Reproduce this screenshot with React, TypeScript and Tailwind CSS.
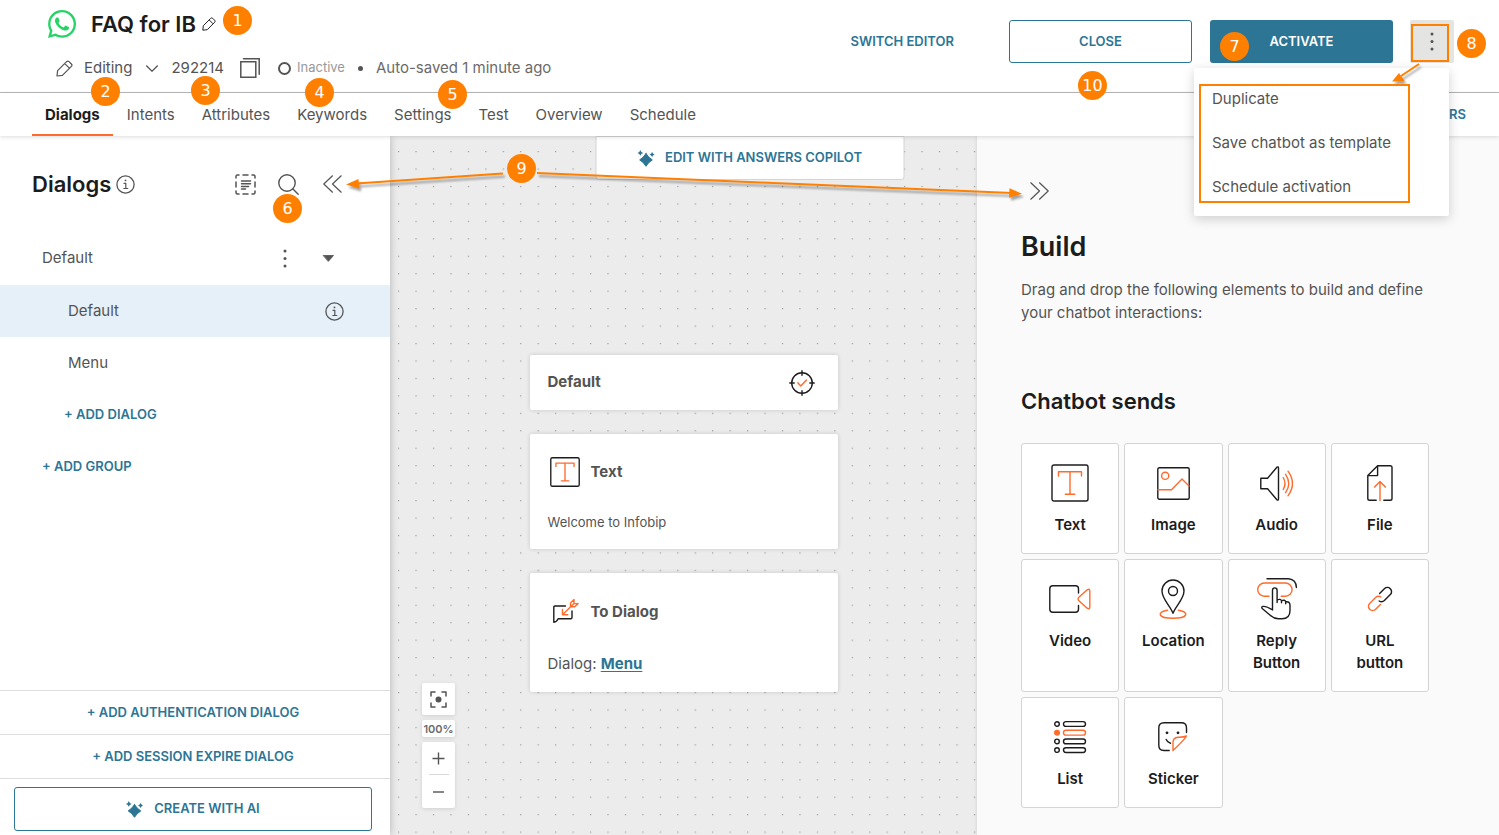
import type { ReactNode } from "react";
import clsx from "clsx";
import { FaWhatsapp } from "react-icons/fa";

const ACCENT = "#ff6b2c";

type IconProps = {
  w: number;
  h: number;
  className?: string;
  children: ReactNode;
};

function Icon({ w, h, className, children }: IconProps) {
  return (
    <svg
      width={w}
      height={h}
      viewBox={`0 0 ${w} ${h}`}
      fill="none"
      stroke="currentColor"
      strokeWidth={1.4}
      strokeLinecap="round"
      strokeLinejoin="round"
      aria-hidden="true"
      className={clsx("shrink-0 overflow-visible", className)}
    >
      {children}
    </svg>
  );
}

function PencilIcon({ size }: { size: number }) {
  return (
    <svg
      width={size}
      height={size}
      viewBox="0 0 17 17"
      fill="none"
      stroke="currentColor"
      strokeWidth={1.2}
      strokeLinejoin="round"
      aria-hidden="true"
    >
      <path d="M1 16 1.6 10.6 10.6 1.6Q11.8.5 13 1.6L15.4 4Q16.5 5.2 15.4 6.4L6.4 15.4ZM8.8 3.6 13.4 8.2" />
    </svg>
  );
}

function InfoIcon() {
  return (
    <Icon w={19} h={19}>
      <circle cx="9.5" cy="9.5" r="8.6" strokeWidth="1.3" />
      <path d="M8 8.3h1.8v5.2M7.8 13.5h4" strokeWidth="1.2" />
      <circle cx="9.5" cy="5.4" r=".9" fill="currentColor" stroke="none" />
    </Icon>
  );
}

function DotsIcon() {
  return (
    <Icon w={4} h={20}>
      <g fill="currentColor" stroke="none">
        <circle cx="2" cy="2" r="1.500" />
        <circle cx="2" cy="9.500" r="1.500" />
        <circle cx="2" cy="17" r="1.500" />
      </g>
    </Icon>
  );
}

function SparkleIcon() {
  return (
    <Icon w={17} h={17}>
      <g fill="currentColor" stroke="none">
        <path
          d="M8.500 3.500Q10.800 7.600 14.800 9.900 10.800 12.200 8.500 16.300 6.200 12.200 2.200 9.900 6.200 7.600 8.500 3.500Z"
          stroke="currentColor"
          strokeWidth="1"
        />
        <path d="M2.800 0 3.800 1.900 5.700 2.900 3.800 3.900 2.800 5.800 1.800 3.900 0 2.900 1.800 1.900Z" />
        <path d="M14.600 1.900 15.500 3.600 17 4.500 15.500 5.400 14.600 7.100 13.700 5.400 12 4.500 13.700 3.600Z" />
      </g>
    </Icon>
  );
}

function TextIcon({ small }: { small?: boolean }) {
  return (
    <svg
      width={small ? 30 : 38}
      height={small ? 30 : 38}
      viewBox="0 0 38 38"
      fill="none"
      stroke="#1c1c1c"
      strokeWidth={small ? 1.7 : 1.4}
      strokeLinecap="round"
      strokeLinejoin="round"
      aria-hidden="true"
    >
      <rect x="1" y="1" width="36" height="36" rx="2" />
      <path d="M7.5 12V7.8h23V12M19 7.8V30M14.3 30.2h9.4" stroke={ACCENT} />
    </svg>
  );
}

const ImageIcon = (
  <Icon w={33} h={33}>
    <rect x=".8" y=".8" width="31.4" height="31.4" rx="1.5" />
    <circle cx="8.2" cy="8.8" r="3.6" stroke={ACCENT} />
    <path d="M1 22.8h13.5L25 12l7 7" stroke={ACCENT} />
  </Icon>
);

const AudioIcon = (
  <Icon w={34} h={35}>
    <path d="M.8 12.2v10.6h6.8l9.3 11q1.6 1 1.6-.8V2q0-1.8-1.6-.8l-9.3 11Z" />
    <path
      d="M23.2 11.5q3.6 6 0 12M25.6 8.3q6.2 9.2 0 18.4M28 5.2q9 12.3 0 24.6"
      stroke={ACCENT}
    />
  </Icon>
);

const FileIcon = (
  <Icon w={26} h={36}>
    <path d="M16.8 35.2h6.4q1.8 0 1.8-1.8V2.6Q25 .8 23.2.8H10.6L.8 10.6v22.8q0 1.8 1.8 1.8h6.6M10.6.8v9.8H.8" />
    <path d="M13 35.4V16.6M7.6 22 13 16.6l5.4 5.4" stroke={ACCENT} />
  </Icon>
);

const VideoIcon = (
  <Icon w={42} h={28}>
    <path d="M29.5 8V3.8q0-3-3-3H3.8q-3 0-3 3v20.4q0 3 3 3h22.7q3 0 3-3V20.5" />
    <path
      d="M29.6 12.4q-1.2 1.6 0 3.2l8.6 7.6q2.6 1.4 2.6-1.2V6q0-2.6-2.6-1.2Z"
      stroke={ACCENT}
    />
  </Icon>
);

const LocationIcon = (
  <Icon w={28} h={40}>
    <path d="M14 34.2C11.5 27.2 3 20 3 12a11 11 0 0 1 22 0c0 8-8.5 15.2-11 22.2Z" />
    <circle cx="14" cy="12" r="4.5" />
    <path
      d="M8.6 31.3C-2.5 32.8-1.5 39.3 14 39.3s16.5-6.5 5.4-8"
      stroke={ACCENT}
    />
  </Icon>
);

const ReplyIcon = (
  <Icon w={40} h={42}>
    <path d="M10 .8h21.5q7.7.7 7.9 8.8" />
    <path
      d="M12 18.2H7.3a6.600 6.600 0 0 1 0-13.200h21.200a6.600 6.600 0 0 1 0 13.200H24.200"
      stroke={ACCENT}
    />
    <path d="M15.500 32V12.200a2.300 2.300 0 0 1 4.600 0v12.300M20.100 21.900q3.700-1.500 4.400 1v1.900M24.500 22.700q3.500-1.400 4.200 1.100v1.900M28.700 23.900q4.300-.7 4.300 3.400v5.200q0 8.300-8 8.300h-3.500q-4.300 0-8.300-3.600l-7.700-6.400q-1.600-1.900.4-2.400 3.200-.4 9.600 3.600" />
  </Icon>
);

const LinkIcon = (
  <Icon w={24} h={24}>
    <g transform="translate(12 12) rotate(-45)">
      <path d="M3.600-4.200h6.800a4.200 4.200 0 0 1 0 8.400H2a4.200 4.200 0 0 1-4-3.400" />
      <path
        d="M-3.600 4.200h-6.800a4.200 4.200 0 0 1 0-8.400H-2a4.200 4.200 0 0 1 4 3.400"
        stroke={ACCENT}
      />
    </g>
  </Icon>
);

const ListIcon = (
  <Icon w={32} h={33}>
    {[3, 11.7, 20.4, 29.1].map((y, i) => (
      <g key={y} stroke={i === 1 ? ACCENT : "#1c1c1c"}>
        <circle cx="3" cy={y} r="2.3" fill={i === 1 ? ACCENT : "none"} />
        <rect x="9.5" y={y - 2.4} width="22" height="4.8" rx="2.4" />
      </g>
    ))}
  </Icon>
);

const StickerIcon = (
  <Icon w={30} h={30}>
    <path d="M28.5 10.5V6q0-5.200-5.200-5.200H6Q.8.8.8 6v17.300q0 5.200 5.200 5.200h5.200M8.200 17.500q1.200 3 4.300 3.800" />
    <g fill="currentColor" stroke="none">
      <circle cx="9" cy="10.800" r="1.400" />
      <circle cx="20" cy="10.800" r="1.400" />
    </g>
    <path
      d="M15 28.600v-8.100q0-5 5-5.300 5.500.2 8.500-1.200-2 3.600-13.500 14.600Z"
      stroke={ACCENT}
    />
  </Icon>
);

const TargetIcon = (
  <Icon w={26} h={26}>
    <circle cx="13" cy="13" r="10.3" />
    <path d="M13 .8v4.400M13 20.800v4.400M.8 13h4.400M20.800 13h4.400" />
    <path d="m8.800 12.800 3 3.200 5.600-6" stroke={ACCENT} />
  </Icon>
);

const ToDialogIcon = (
  <Icon w={26} h={26}>
    <path d="M12.500 7H2Q.8 7 .8 8.200v15q3-.3 4.400-3.400h12.600q1.200 0 1.200-1.200V12" />
    <path
      d="M9.500 10.500v5.300h5.300M9.500 15.800 21 4.500M17.500 7.800V4L21 .6v4h4.200l-3.500 3.200Z"
      stroke={ACCENT}
    />
  </Icon>
);

const tabs = [
  "Dialogs",
  "Intents",
  "Attributes",
  "Keywords",
  "Settings",
  "Test",
  "Overview",
  "Schedule",
];

const elements = [
  { label: "Text", icon: <TextIcon /> },
  { label: "Image", icon: ImageIcon },
  { label: "Audio", icon: AudioIcon },
  { label: "File", icon: FileIcon },
  { label: "Video", icon: VideoIcon },
  { label: "Location", icon: LocationIcon },
  { label: "Reply Button", icon: ReplyIcon },
  { label: "URL button", icon: LinkIcon },
  { label: "List", icon: ListIcon },
  { label: "Sticker", icon: StickerIcon },
];

const badges = [
  { n: 1, pos: "left-[223px] top-[6px]" },
  { n: 2, pos: "left-[91px] top-[77px]" },
  { n: 3, pos: "left-[191px] top-[76px]" },
  { n: 4, pos: "left-[305px] top-[78px]" },
  { n: 5, pos: "left-[438px] top-[80px]" },
  { n: 6, pos: "left-[273px] top-[194px]" },
  { n: 9, pos: "left-[507px] top-[154px]" },
  { n: 7, pos: "right-[250px] top-[32px]" },
  { n: 8, pos: "right-[13px] top-[29px]" },
  { n: 10, pos: "right-[392px] top-[71px]" },
];

function Header() {
  return (
    <header className="flex h-[93px] justify-between border-b border-[#b9b9b9] bg-white pr-[45px] pl-12">
      <div className="pt-2">
        <div className="flex h-8 items-center">
          <FaWhatsapp size={32} className="-ml-0.5 text-[#25d366]" />
          <h1 className="ml-[13px] text-[22px] font-semibold text-[#1c1c1c]">FAQ for IB</h1>
          <button type="button" aria-label="Rename chatbot" className="ml-1.5 text-[#1c1c1c]">
            <PencilIcon size={14} />
          </button>
        </div>
        <div className="mt-4 flex h-6 items-center text-[15px]">
          <button type="button" className="ml-2 flex items-center">
            <PencilIcon size={17} />
            <span className="ml-[11px]">Editing</span>
            <Icon w={12} h={7} className="ml-3.5">
              <path d="M.5.8 6 6.2 11.5.8" strokeWidth="1.2" />
            </Icon>
          </button>
          <span className="ml-[13px]">292214</span>
          <button type="button" aria-label="Copy ID" className="ml-4">
            <Icon w={20} h={20}>
              <path
                d="M.8 3.8h15v15.400H.8ZM3.500.8h15.700v15.400"
                strokeWidth="1.5"
                strokeLinejoin="miter"
              />
            </Icon>
          </button>
          <span className="ml-[18px] h-[13px] w-[13px] rounded-full border-2 border-[#545454]" />
          <span className="ml-1.5 text-[13px] text-[#999999]">Inactive</span>
          <span className="ml-[13px] h-[5px] w-[5px] rounded-full bg-[#545454]" />
          <span className="ml-[13px] text-[#6b6b6b]">Auto-saved 1 minute ago</span>
        </div>
      </div>
      <div className="mt-5 flex h-[43px] items-stretch text-[13px] font-semibold">
        <button type="button" className="mr-[55px] text-[#2d7595]">SWITCH EDITOR</button>
        <button
          type="button"
          className="mr-[18px] w-[183px] rounded-[3px] border border-[#2d7595] text-[#2d7595]"
        >
          CLOSE
        </button>
        <button type="button" className="mr-[17px] w-[183px] rounded-[3px] bg-[#2d7595] text-white">
          ACTIVATE
        </button>
        <div className="relative flex">
          <button
            type="button"
            aria-label="More actions"
            className="flex w-11 items-center justify-center rounded-[2px] bg-[#e4e4e2]"
          >
            <DotsIcon />
          </button>
          <div className="absolute top-12 right-[5px] z-20 flex h-[148px] w-[255px] flex-col rounded-[2px] bg-white pt-[9px] text-[15px] font-normal shadow-[0_3px_12px_rgba(0,0,0,0.18)]">
            {["Duplicate", "Save chatbot as template", "Schedule activation"].map((item) => (
              <button key={item} type="button" className="h-11 pl-[18px] text-left">
                {item}
              </button>
            ))}
          </div>
        </div>
      </div>
    </header>
  );
}

function Tabs() {
  return (
    <nav className="relative z-10 flex h-[43px] items-stretch justify-between bg-white pr-[33px] pl-8 text-[15px] shadow-[0_1px_4px_rgba(0,0,0,0.14)]">
      <div className="flex gap-px">
        {tabs.map((tab, i) => (
          <a
            key={tab}
            href="#"
            className={clsx(
              "flex items-center border-b-2 px-[13px] pt-[3px]",
              i === 0 ? "border-[#ff6b2c] font-bold text-[#1c1c1c]" : "border-transparent"
            )}
          >
            {tab}
          </a>
        ))}
      </div>
      <button type="button" className="text-[13px] font-semibold text-[#2d7595]">RS</button>
    </nav>
  );
}

function Sidebar() {
  return (
    <aside className="relative z-[1] flex w-[390px] shrink-0 flex-col bg-white text-[15px] shadow-[0_0_8px_rgba(0,0,0,0.25)]">
      <div className="flex h-24 items-center pl-8">
        <h2 className="text-[22px] font-semibold text-[#1c1c1c]">Dialogs</h2>
        <span className="ml-[5px]">
          <InfoIcon />
        </span>
        <div className="mr-12 ml-auto flex items-center gap-[22px]">
          <button type="button" aria-label="Select dialogs">
            <Icon w={21} h={21}>
              <path
                d="M4 1H2.500Q1 1 1 2.500V4M17 1h1.500Q20 1 20 2.500V4M4 20H2.500Q1 20 1 18.500V17M17 20h1.500q1.500 0 1.500-1.500V17M8 1h5M8 20h5M1 8v5M20 8v5M6.500 7h9M6.500 9.800h9M6.500 12.500h7M6.500 15h4"
                strokeWidth="1.5"
              />
            </Icon>
          </button>
          <button type="button" aria-label="Search">
            <Icon w={21} h={21}>
              <circle cx="9" cy="9" r="8.2" />
              <path d="m15 15 5.200 5.200" />
            </Icon>
          </button>
          <button type="button" aria-label="Collapse panel" className="ml-0.5">
            <Icon w={19} h={18}>
              <path d="M9.500.8.8 9l8.700 8.200M18.200.8 9.500 9l8.700 8.200" strokeWidth="1.2" />
            </Icon>
          </button>
        </div>
      </div>
      <div className="flex h-[53px] items-center pl-[42px]">
        Default
        <button type="button" aria-label="Group actions" className="mr-9 ml-auto">
          <DotsIcon />
        </button>
        <button type="button" aria-label="Collapse group" className="mr-14">
          <Icon w={11} h={7}>
            <path d="M.5.500h10L5.500 6.200Z" fill="currentColor" strokeWidth=".8" />
          </Icon>
        </button>
      </div>
      <a
        href="#"
        className="flex h-[52px] items-center justify-between bg-[#e5f0f8] pr-[46px] pl-[68px]"
      >
        Default
        <InfoIcon />
      </a>
      <a href="#" className="flex h-[52px] items-center pl-[68px]">Menu</a>
      <button
        type="button"
        className="h-[52px] pl-16 text-left text-[13px] font-semibold text-[#2d7595]"
      >
        + ADD DIALOG
      </button>
      <button
        type="button"
        className="h-[51px] pl-[42px] text-left text-[13px] font-semibold text-[#2d7595]"
      >
        + ADD GROUP
      </button>
      <div className="mt-auto text-[13px] font-semibold text-[#2d7595]">
        <button type="button" className="h-11 w-full border-t border-[#dedede] pr-1">
          + ADD AUTHENTICATION DIALOG
        </button>
        <button type="button" className="h-11 w-full border-t border-[#dedede] pr-1">
          + ADD SESSION EXPIRE DIALOG
        </button>
        <div className="border-t border-[#dedede] pt-2 pr-[18px] pb-1 pl-3.5">
          <button
            type="button"
            className="flex h-11 w-full items-center justify-center gap-[11px] rounded-[3px] border border-[#2d7595]"
          >
            <SparkleIcon />
            CREATE WITH AI
          </button>
        </div>
      </div>
    </aside>
  );
}

const node = "w-[308px] rounded-[2px] bg-white px-[18px] shadow-[0_0_4px_rgba(0,0,0,0.16)]";

function Canvas() {
  return (
    <section className="relative flex-1 bg-[#ececec]">
      <svg className="absolute inset-0 h-full w-full" aria-hidden="true">
        <pattern id="dots" x="8" y="15" width="17.45" height="17.45" patternUnits="userSpaceOnUse">
          <rect width="1.2" height="1.2" fill="#9a9a9a" />
        </pattern>
        <rect width="100%" height="100%" fill="url(#dots)" />
      </svg>
      <div className="relative flex flex-col items-center gap-6 pt-[219px]">
        <div className={clsx(node, "flex h-[55px] items-center justify-between")}>
          <h3 className="text-[15px] font-bold">Default</h3>
          <span className="mr-[5px] text-[#1c1c1c]">{TargetIcon}</span>
        </div>
        <div className={clsx(node, "pt-5 pb-[15px]")}>
          <div className="flex h-9 items-center">
            <span className="flex w-[43px] pl-0.5">
              <TextIcon small />
            </span>
            <h3 className="text-[15px] font-bold">Text</h3>
          </div>
          <p className="mt-5 text-[13px] leading-6">Welcome to Infobip</p>
        </div>
        <div className={clsx(node, "pt-[21px] pb-[15px]")}>
          <div className="flex h-9 items-center">
            <span className="flex w-[43px] pl-[5px] text-[#1c1c1c]">{ToDialogIcon}</span>
            <h3 className="text-[15px] font-bold">To Dialog</h3>
          </div>
          <p className="mt-5 text-[15px] leading-[27px]">
            Dialog:{" "}
            <a href="#" className="font-bold text-[#2d7595] underline underline-offset-2">Menu</a>
          </p>
        </div>
      </div>
      <div className="absolute bottom-[27px] left-8 flex w-[33px] flex-col gap-[5px]">
        <button
          type="button"
          aria-label="Fit to screen"
          className="flex h-8 items-center justify-center rounded-[2px] bg-white shadow-[0_1px_4px_rgba(0,0,0,0.12)]"
        >
          <Icon w={17} h={17}>
            <path d="M1 5V1h4M12 1h4v4M16 12v4h-4M5 16H1v-4" strokeWidth="1.5" />
            <circle cx="8.5" cy="8.5" r="3" fill="currentColor" stroke="none" />
          </Icon>
        </button>
        <span className="h-[17px] rounded-[2px] bg-white text-center text-[11px] leading-[18px] font-semibold text-[#6b6b6b] shadow-[0_1px_4px_rgba(0,0,0,0.12)]">
          100%
        </span>
        <div className="flex flex-col items-center rounded-[2px] bg-white shadow-[0_1px_4px_rgba(0,0,0,0.12)]">
          <button type="button" aria-label="Zoom in" className="flex h-8 w-full items-center justify-center">
            <Icon w={13} h={13}>
              <path d="M6.500.500v12M.5 6.500h12" strokeLinecap="butt" />
            </Icon>
          </button>
          <span className="h-px w-5 bg-[#d9d9d9]" />
          <button type="button" aria-label="Zoom out" className="flex h-[33px] w-full items-center justify-center">
            <Icon w={11} h={2}>
              <path d="M0 1h11" strokeLinecap="butt" />
            </Icon>
          </button>
        </div>
      </div>
    </section>
  );
}

function BuildPanel() {
  return (
    <aside className="relative w-[522px] shrink-0 bg-[#fafafa] pt-[43px] pr-[70px] pl-11 shadow-[0_0_4px_rgba(0,0,0,0.12)]">
      <button type="button" aria-label="Collapse build panel" className="flex h-6 items-center pl-[9px]">
        <Icon w={19} h={18}>
          <path d="M.8.800 9.500 9 .8 17.200M9.500.8 18.200 9l-8.700 8.200" strokeWidth="1.2" />
        </Icon>
      </button>
      <h2 className="mt-7 text-[27px] leading-8 font-semibold text-[#1c1c1c]">Build</h2>
      <p className="mt-[15px] text-[15px] leading-[23px]">
        Drag and drop the following elements to build and define your chatbot interactions:
      </p>
      <h3 className="mt-[63px] text-[22px] leading-7 font-semibold text-[#1c1c1c]">Chatbot sends</h3>
      <div className="mt-7 grid grid-cols-4 gap-[5px]">
        {elements.map(({ label, icon }) => (
          <button
            key={label}
            type="button"
            className="flex min-h-[111px] flex-col items-center rounded-[3px] border border-[#d4d4d4] bg-white px-4 pt-[17px] pb-[17px] text-[#1c1c1c]"
          >
            <span className="flex h-11 items-center">{icon}</span>
            <span className="mt-[9px] text-[15px] leading-[22px] font-semibold">{label}</span>
          </button>
        ))}
      </div>
    </aside>
  );
}

function Callouts() {
  return (
    <div className="pointer-events-none absolute inset-0 z-30 overflow-hidden">
      <svg className="absolute inset-0 h-full w-full" aria-hidden="true">
        <g
          stroke="#ff8000"
          strokeWidth="2"
          fill="#ff8000"
          className="drop-shadow-[2px_3px_1px_rgba(0,0,0,0.35)]"
        >
          <path d="M503 173.500 356 183.500M537 173 1012 193M1419 64l-18 12" fill="none" />
          <path
            d="m346 184.500 12.500-5.500.7 9.500ZM1022 193.700l-12.500-5.500-.5 9.500ZM1392 81.500l7-8.500 5.500 8Z"
            strokeWidth="0"
          />
        </g>
        <g stroke="#ff8000" strokeWidth="2" fill="none">
          <rect x="1412" y="25" width="36" height="36" />
          <rect x="1200" y="85" width="209" height="117" />
        </g>
      </svg>
      {badges.map(({ n, pos }) => (
        <span
          key={n}
          className={clsx(
            "absolute flex h-[29px] w-[29px] items-center justify-center rounded-full bg-[#ff8000] font-['DejaVu_Sans',sans-serif] text-[16px] text-white",
            pos
          )}
        >
          {n}
        </span>
      ))}
    </div>
  );
}

export default function App() {
  return (
    <div className="relative flex min-h-screen flex-col bg-white font-['Inter',sans-serif] text-[#545454]">
      <Header />
      <Tabs />
      <main className="relative flex flex-1">
        <Sidebar />
        <Canvas />
        <BuildPanel />
        <button
          type="button"
          className="absolute top-0 left-1/2 flex h-11 w-[309px] -translate-x-1/2 items-center justify-center gap-[11px] rounded-b-[3px] border border-[#d4d4d4] bg-white text-[13px] font-semibold text-[#2d7595]"
        >
          <SparkleIcon />
          EDIT WITH ANSWERS COPILOT
        </button>
      </main>
      <Callouts />
    </div>
  );
}
